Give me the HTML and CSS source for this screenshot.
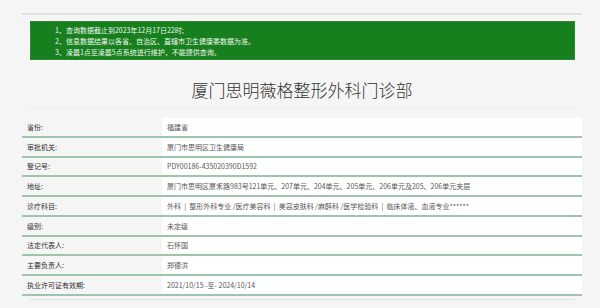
FILE: index.html
```html
<!DOCTYPE html>
<html lang="zh-CN">

<head>
  <meta charset="UTF-8">
  <meta name="viewport" content="width=device-width, initial-scale=1.0">
  <title>厦门思明薇格整形外科门诊部</title>
  <link rel="stylesheet" href="styles.css">
</head>

<body>
  <div class="page">
    <div class="topline"></div>
    <div class="notice">
      <p>1、查询数据截止到2023年12月17日22时;</p>
      <p>2、信息数据结果以各省、自治区、直辖市卫生健康委数据为准。</p>
      <p>3、凌晨1点至凌晨5点系统进行维护，不能提供查询。</p>
    </div>
    <h1 class="title">厦门思明薇格整形外科门诊部</h1>
    <div class="rule"></div>
    <div class="info">
      <div class="row"><div class="label">省份:</div><div class="value">福建省</div></div>
      <div class="row"><div class="label">审批机关:</div><div class="value">厦门市思明区卫生健康局</div></div>
      <div class="row"><div class="label">登记号:</div><div class="value">PDY00186-435020390D1592</div></div>
      <div class="row"><div class="label">地址:</div><div class="value">厦门市思明区厦禾路983号121单元、207单元、204单元、205单元、206单元及205、206单元夹层</div></div>
      <div class="row"><div class="label">诊疗科目:</div><div class="value">外科 &nbsp;| &nbsp;整形外科专业 /医疗美容科 &nbsp;| &nbsp;美容皮肤科 /麻醉科 /医学检验科 &nbsp;| &nbsp;临床体液、血液专业******</div></div>
      <div class="row"><div class="label">级别:</div><div class="value">未定级</div></div>
      <div class="row"><div class="label">法定代表人:</div><div class="value">石怀国</div></div>
      <div class="row"><div class="label">主要负责人:</div><div class="value">郑德洪</div></div>
      <div class="row"><div class="label">执业许可证有效期:</div><div class="value">2021/10/15 -至- 2024/10/14</div></div>
    </div>
    <div class="rule bottom"></div>
  </div>
</body>

</html>
```

FILE: styles.css
```css
body {
  margin: 0;
  padding: 0;
  background-color: #f5f5f5;
  font-family: "Noto Sans CJK SC", "Noto Sans", sans-serif;
  color: #333;
}

.page {
  margin: 0 18px 0 22px;
  padding-top: 13px;
}

.topline {
  height: 2px;
  background-color: #e0e0e0;
}

.notice {
  margin: 6px 7px 0 8px;
  height: 39px;
  box-sizing: border-box;
  padding: 3px 0 0 24px;
  background-color: #177f1d;
  border: 1px solid #2b8a30;
  box-shadow: 0 0 0 1px #fafafa;
  color: #eef7ee;
  font-size: 7px;
  line-height: 11px;
}

.notice p {
  margin: 0;
}

.title {
  margin: 18px 0 0;
  text-align: center;
  font-size: 17px;
  line-height: 24px;
  font-weight: 300;
  color: #333;
}

.rule {
  margin: 6px 7px 0 8px;
  height: 1px;
  background-color: #ececec;
}

.rule.bottom {
  margin-top: 3px;
  background-color: #e2e2e2;
}

.info {
  margin-top: 9px;
}

.row {
  display: grid;
  grid-template-columns: 140px 1fr;
  height: 19.75px;
  box-sizing: border-box;
  border-bottom: 2px solid #9ec4aa;
  font-size: 7px;
}

.label {
  padding-left: 5px;
  display: flex;
  align-items: center;
  color: #2f2f2f;
}

.value {
  padding-left: 5px;
  display: flex;
  align-items: center;
  background-color: #fff;
  color: #555;
  white-space: nowrap;
}
```
